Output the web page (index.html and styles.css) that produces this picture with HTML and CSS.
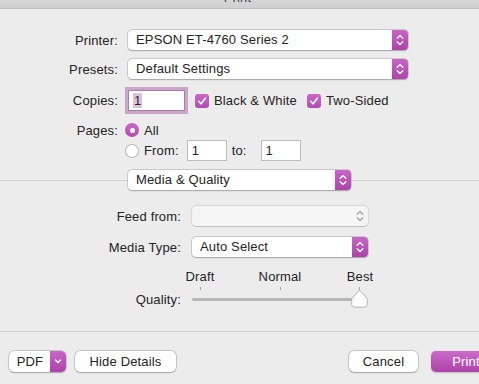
FILE: index.html
```html
<!DOCTYPE html>
<html>
<head>
<meta charset="utf-8">
<title>Print</title>
<link rel="stylesheet" href="styles.css">
</head>
<body>
<svg class="defs" width="0" height="0">
  <symbol id="updown" viewBox="0 0 16 20">
    <path d="M5.2 8.2 L8 5.4 L10.8 8.2" fill="none" stroke="currentColor" stroke-width="1.4" stroke-linecap="round" stroke-linejoin="round"/>
    <path d="M5.2 11.8 L8 14.6 L10.8 11.8" fill="none" stroke="currentColor" stroke-width="1.4" stroke-linecap="round" stroke-linejoin="round"/>
  </symbol>
  <symbol id="down" viewBox="0 0 16 21">
    <path d="M5.5 9 L8 11.5 L10.5 9" fill="none" stroke="currentColor" stroke-width="1.4" stroke-linecap="round" stroke-linejoin="round"/>
  </symbol>
  <symbol id="check" viewBox="0 0 14 14">
    <path d="M3.6 7.3 L6 9.8 L10.4 4.2" fill="none" stroke="currentColor" stroke-width="1.6" stroke-linecap="round" stroke-linejoin="round"/>
  </symbol>
</svg>
<div class="window">
  <div class="titlebar"><span class="title">Print</span></div>

  <div class="general">
    <div class="row row-printer">
      <span class="label">Printer:</span>
      <div class="popup popup-wide"><span class="popup-text">EPSON ET-4760 Series 2</span><span class="stepper"><svg class="chev"><use href="#updown"/></svg></span></div>
    </div>
    <div class="row row-presets">
      <span class="label">Presets:</span>
      <div class="popup popup-wide"><span class="popup-text">Default Settings</span><span class="stepper"><svg class="chev"><use href="#updown"/></svg></span></div>
    </div>
    <div class="row row-copies">
      <span class="label">Copies:</span>
      <div class="field field-copies"><span class="sel">1</span></div>
      <span class="checkbox cb-first"><svg class="ck"><use href="#check"/></svg></span><span class="opt">Black &amp; White</span>
      <span class="checkbox cb-second"><svg class="ck"><use href="#check"/></svg></span><span class="opt">Two-Sided</span>
    </div>
    <div class="row row-pages">
      <span class="label">Pages:</span>
      <span class="radio on"></span><span class="opt">All</span>
    </div>
    <div class="row row-from">
      <span class="label"></span>
      <span class="radio"></span><span class="opt">From:</span>
      <div class="field field-num field-from">1</div>
      <span class="opt opt-to">to:</span>
      <div class="field field-num field-to">1</div>
    </div>
  </div>

  <div class="panel-select">
    <div class="popup popup-panel"><span class="popup-text">Media &amp; Quality</span><span class="stepper"><svg class="chev"><use href="#updown"/></svg></span></div>
  </div>

  <div class="media">
    <div class="row row-feed">
      <span class="label label-media">Feed from:</span>
      <div class="popup popup-media disabled"><span class="popup-text"></span><span class="stepper stepper-off"><svg class="chev"><use href="#updown"/></svg></span></div>
    </div>
    <div class="row row-type">
      <span class="label label-media">Media Type:</span>
      <div class="popup popup-media"><span class="popup-text">Auto Select</span><span class="stepper"><svg class="chev"><use href="#updown"/></svg></span></div>
    </div>
    <div class="row row-marks">
      <span class="label label-media"></span>
      <div class="marks">
        <span class="mark">Draft</span>
        <span class="mark">Normal</span>
        <span class="mark">Best</span>
      </div>
    </div>
    <div class="row row-ticks">
      <span class="label label-media"></span>
      <div class="ticks"><span class="tick"></span><span class="tick"></span><span class="tick"></span></div>
    </div>
    <div class="row row-quality">
      <span class="label label-media">Quality:</span>
      <div class="slider">
        <div class="track"></div>
        <svg class="knob" width="17" height="18" viewBox="0 0 17 18"><path d="M8.5 0.8 Q9.2 0.8 9.8 1.5 L15.6 7.6 Q16.3 8.3 16.3 9.3 L16.3 14.5 Q16.3 17.2 13.6 17.2 L3.4 17.2 Q0.7 17.2 0.7 14.5 L0.7 9.3 Q0.7 8.3 1.4 7.6 L7.2 1.5 Q7.8 0.8 8.5 0.8 Z" fill="#ffffff" stroke="#b3b3b3" stroke-width="1"/></svg>
      </div>
    </div>
  </div>

  <div class="footer">
    <div class="btn pdf"><span class="pdf-text">PDF</span><span class="pdf-menu"><svg class="chev-down"><use href="#down"/></svg></span></div>
    <div class="btn btn-hide">Hide Details</div>
    <div class="btn btn-cancel">Cancel</div>
    <div class="btn btn-print">Print</div>
  </div>
</div>
</body>
</html>
```

FILE: styles.css
```css
* { box-sizing: border-box; }

html, body {
  margin: 0;
  padding: 0;
}

body {
  width: 479px;
  height: 384px;
  overflow: hidden;
  background: #ececec;
  font-family: "Liberation Sans", Arial, sans-serif;
  font-size: 13px;
  letter-spacing: 0.15px;
  color: #242424;
}

.defs {
  position: absolute;
  width: 0;
  height: 0;
  overflow: hidden;
}

.window {
  width: 479px;
  height: 384px;
  display: flex;
  flex-direction: column;
}

.titlebar {
  height: 9px;
  overflow: hidden;
  text-align: center;
  background: linear-gradient(#d6d6d6, #d0d0d0);
  border-bottom: 1px solid #bdbdbd;
  flex-shrink: 0;
}

.title {
  display: block;
  margin-top: -10px;
  line-height: 16px;
  font-size: 13px;
  color: #4a4a4a;
  padding-right: 4px;
}

.row {
  display: flex;
  align-items: center;
}

.label {
  width: 118px;
  margin-right: 10px;
  text-align: right;
  flex-shrink: 0;
  white-space: nowrap;
}

.general {
  padding-top: 21px;
}

.row-printer { height: 20px; }
.row-presets { height: 20px; margin-top: 9px; }
.row-copies { height: 27px; margin-top: 8px; }
.row-pages { height: 14px; margin-top: 9px; }
.row-from { height: 21px; margin-top: 3px; }

/* popup buttons */
.popup {
  height: 20px;
  display: flex;
  align-items: stretch;
  background: #ffffff;
  border-radius: 4px;
  box-shadow: 0 0 0 0.5px rgba(0,0,0,0.22), 0 0.5px 1.5px rgba(0,0,0,0.22);
  overflow: hidden;
}

.popup-text {
  flex: 1;
  padding-left: 8px;
  line-height: 20px;
  white-space: nowrap;
}

.stepper {
  width: 16px;
  flex-shrink: 0;
  background: linear-gradient(#c865c6, #ad43ab);
  color: #ffffff;
  display: flex;
  align-items: center;
  justify-content: center;
}

.stepper-off {
  background: transparent;
  color: #a8a8a8;
}

.chev {
  width: 16px;
  height: 20px;
}

.popup-wide { width: 280px; }
.popup-panel { width: 223px; }
.popup-media { width: 176px; }

.disabled {
  background: #f5f5f5;
  box-shadow: 0 0 0 0.5px rgba(0,0,0,0.14), 0 0.5px 1px rgba(0,0,0,0.12);
}

/* text fields */
.field {
  height: 21px;
  background: #ffffff;
  border: 1px solid #bdbdbd;
  line-height: 19px;
  padding-left: 4px;
  flex-shrink: 0;
}

.field-copies {
  width: 57px;
  border-color: #a77fa6;
  box-shadow: 0 0 0 3px rgba(183, 122, 182, 0.62);
}

.sel {
  background: #dcc2db;
  padding: 0 1px;
}

.field-from {
  width: 40px;
  margin-left: 8px;
}

.field-to {
  width: 40px;
  margin-left: 14px;
}

.opt-to {
  margin-left: 10px;
}

/* checkbox and radio */
.checkbox {
  width: 14px;
  height: 14px;
  border-radius: 3px;
  background: linear-gradient(#c967c7, #b24db0);
  color: #ffffff;
  display: flex;
  flex-shrink: 0;
}

.ck { width: 14px; height: 14px; }

.cb-first { margin-left: 10px; }
.cb-second { margin-left: 10px; }

.opt {
  margin-left: 5px;
  white-space: nowrap;
}

.radio {
  width: 14px;
  height: 14px;
  border-radius: 50%;
  background: #ffffff;
  box-shadow: inset 0 0 0 1px #b5b5b5;
  margin-left: -3px;
  flex-shrink: 0;
  display: flex;
  align-items: center;
  justify-content: center;
}

.radio.on {
  background: linear-gradient(#c967c7, #b24db0);
  box-shadow: none;
}

.radio.on::after {
  content: "";
  width: 5px;
  height: 5px;
  border-radius: 50%;
  background: #ffffff;
}

/* panel select with separator */
.panel-select {
  margin-top: 9px;
  height: 20px;
  padding-left: 128px;
  background: linear-gradient(#d4d4d4, #d4d4d4) 0 10px / 100% 1px no-repeat;
}

/* media section */
.label-media {
  width: 181px;
  margin-right: 11px;
}

.row-feed { height: 20px; margin-top: 16px; }
.row-type { height: 20px; margin-top: 11px; }
.row-marks { height: 16px; margin-top: 12px; }
.row-ticks { height: 3px; margin-top: 2px; align-items: stretch; }
.row-quality { height: 18px; }

.marks, .ticks {
  width: 176px;
  padding: 0 8px;
  display: flex;
  justify-content: space-between;
}

.mark {
  width: 0;
  display: flex;
  justify-content: center;
  white-space: nowrap;
  line-height: 16px;
}

.tick {
  width: 1px;
  background: #a9a9a9;
}

.slider {
  width: 176px;
  height: 18px;
  position: relative;
  display: flex;
  align-items: center;
}

.track {
  width: 168px;
  height: 3px;
  border-radius: 2px;
  background: #b7b7b7;
  margin-top: 1px;
}

.knob {
  position: absolute;
  right: 0;
  top: 0;
}

/* footer */
.footer {
  margin-top: 23px;
  border-top: 1px solid #d2d2d2;
  padding: 19px 0 0 9px;
  display: flex;
  align-items: flex-start;
}

.btn {
  height: 21px;
  line-height: 21px;
  background: #ffffff;
  border-radius: 5px;
  box-shadow: 0 0 0 0.5px rgba(0,0,0,0.25), 0 0.5px 1.5px rgba(0,0,0,0.2);
  text-align: center;
  white-space: nowrap;
  flex-shrink: 0;
}

.pdf {
  width: 57px;
  display: flex;
  overflow: hidden;
}

.pdf-text {
  flex: 1;
  text-align: center;
  padding-left: 1px;
}

.pdf-menu {
  width: 16px;
  background: linear-gradient(#c865c6, #ad43ab);
  color: #ffffff;
  display: flex;
}

.chev-down { width: 16px; height: 21px; }

.btn-hide {
  width: 101px;
  margin-left: 9px;
}

.btn-cancel {
  width: 69px;
  margin-left: auto;
}

.btn-print {
  width: 70px;
  margin-left: 13px;
  margin-right: -22px;
  color: #ffffff;
  background: linear-gradient(#cb6cc9, #ac42aa);
  box-shadow: 0 0.5px 1.5px rgba(0,0,0,0.2);
}
```
